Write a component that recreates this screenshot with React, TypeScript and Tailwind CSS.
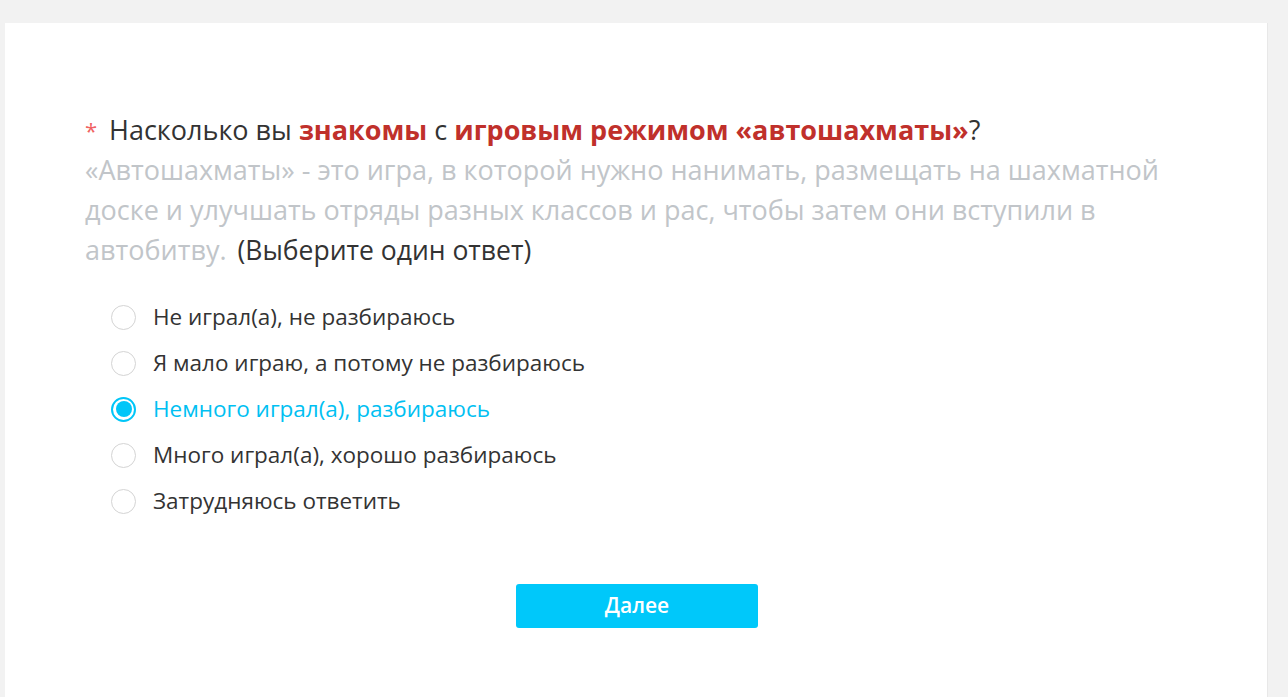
import React, { useState } from "react";

const options = [
  "Не играл(а), не разбираюсь",
  "Я мало играю, а потому не разбираюсь",
  "Немного играл(а), разбираюсь",
  "Много играл(а), хорошо разбираюсь",
  "Затрудняюсь ответить",
];

export default function App() {
  const [selected, setSelected] = useState(2);
  return (
    <div
      className="min-h-[697px] bg-[#f2f2f2] pl-[5px] pr-[20px] pt-[23px]"
      style={{ fontFamily: '"Open Sans", "Noto Sans", sans-serif' }}
    >
      <div className="min-h-[674px] bg-white border-r border-[#e8e8e8] pl-[80px] pr-[80px] pt-[87px]">
        <div className="text-[27px] leading-[40px] text-[#333] whitespace-nowrap">
          <span className="inline-block w-[24px] text-[22px] text-[#f06262] align-top">*</span>
          Насколько вы <span className="font-bold text-[#c0302b]">знакомы</span> с{" "}
          <span className="font-bold text-[#c0302b]">игровым режимом «автошахматы»</span>?
        </div>
        <div className="text-[27px] leading-[40px] text-[#c1c5c9]">
          «Автошахматы» - это игра, в которой нужно нанимать, размещать на шахматной доске и улучшать отряды разных классов и рас, чтобы затем они вступили в автобитву.{" "}
          <span className="text-[#333] text-[26.5px] ml-[4px]">(Выберите один ответ)</span>
        </div>
        <div className="mt-[31px] ml-[26px] flex flex-col gap-[14px]">
          {options.map((o, i) => {
            const on = i === selected;
            return (
              <div
                key={o}
                className="flex items-center h-[32px] cursor-pointer"
                onClick={() => setSelected(i)}
              >
                <span
                  className={
                    on
                      ? "w-[25px] h-[25px] rounded-full border-2 border-[#00c6f8] flex items-center justify-center"
                      : "w-[25px] h-[25px] rounded-full border border-[#d4d4d4]"
                  }
                >
                  {on && <span className="w-[16px] h-[16px] rounded-full bg-[#00c6f8]" />}
                </span>
                <span
                  className={
                    "ml-[17px] text-[22.5px] " + (on ? "text-[#00c0f2]" : "text-[#333]")
                  }
                >
                  {o}
                </span>
              </div>
            );
          })}
        </div>
        <div className="mt-[67px] flex justify-center pl-[2px]">
          <button className="w-[242px] h-[44px] rounded-[3px] bg-[#00c8fa] text-white text-[21px] font-semibold">
            Далее
          </button>
        </div>
      </div>
    </div>
  );
}
